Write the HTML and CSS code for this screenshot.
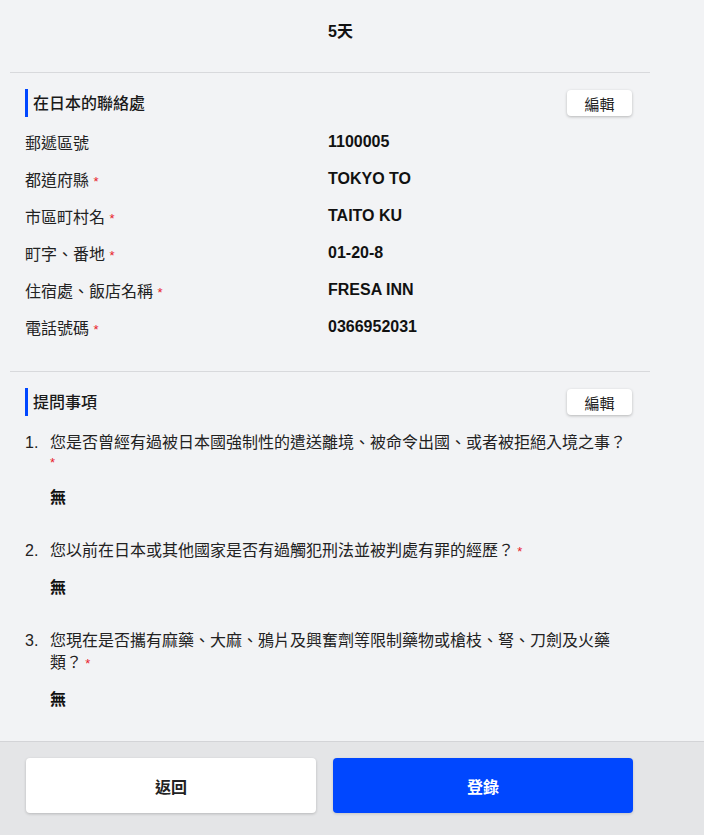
FILE: index.html
```html
<!DOCTYPE html>
<html lang="zh-Hant">
<head>
<meta charset="utf-8">
<title>確認</title>
<link rel="stylesheet" href="styles.css">
</head>
<body>
<main class="page">
  <div class="summary">
    <div class="row"><span class="label"></span><span class="value">5天</span></div>
  </div>

  <section class="section">
    <div class="section-head">
      <h2 class="section-title">在日本的聯絡處</h2>
      <button class="edit-btn" type="button">編輯</button>
    </div>
    <dl class="rows">
      <div class="row"><dt class="label">郵遞區號</dt><dd class="value">1100005</dd></div>
      <div class="row"><dt class="label">都道府縣 <span class="req">*</span></dt><dd class="value">TOKYO TO</dd></div>
      <div class="row"><dt class="label">市區町村名 <span class="req">*</span></dt><dd class="value">TAITO KU</dd></div>
      <div class="row"><dt class="label">町字、番地 <span class="req">*</span></dt><dd class="value">01-20-8</dd></div>
      <div class="row"><dt class="label">住宿處、飯店名稱 <span class="req">*</span></dt><dd class="value">FRESA INN</dd></div>
      <div class="row"><dt class="label">電話號碼 <span class="req">*</span></dt><dd class="value">0366952031</dd></div>
    </dl>
  </section>

  <section class="section">
    <div class="section-head">
      <h2 class="section-title">提問事項</h2>
      <button class="edit-btn" type="button">編輯</button>
    </div>
    <ol class="questions">
      <li class="question">
        <span class="q-num">1.</span>
        <div class="q-body">
          <p class="q-text"><span class="q-main">您是否曾經有過被日本國強制性的遣送離境、被命令出國、或者被拒絕入境之事？</span> <span class="req">*</span></p>
          <p class="q-answer">無</p>
        </div>
      </li>
      <li class="question">
        <span class="q-num">2.</span>
        <div class="q-body">
          <p class="q-text"><span class="q-main">您以前在日本或其他國家是否有過觸犯刑法並被判處有罪的經歷？</span> <span class="req">*</span></p>
          <p class="q-answer">無</p>
        </div>
      </li>
      <li class="question">
        <span class="q-num">3.</span>
        <div class="q-body">
          <p class="q-text"><span class="q-main">您現在是否攜有麻藥、大麻、鴉片及興奮劑等限制藥物或槍枝、弩、刀劍及火藥類？</span> <span class="req">*</span></p>
          <p class="q-answer">無</p>
        </div>
      </li>
    </ol>
  </section>
</main>

<footer class="actions">
  <button class="btn btn-back" type="button">返回</button>
  <button class="btn btn-submit" type="button">登錄</button>
</footer>
</body>
</html>
```

FILE: styles.css
```css
html, body {
  margin: 0;
  padding: 0;
  height: 100%;
}

body {
  background: #f2f3f5;
  font-family: "Liberation Sans", "Noto Sans CJK TC", sans-serif;
  color: #1a1a1a;
  display: flex;
  flex-direction: column;
  height: 100vh;
  overflow: hidden;
}

.page {
  flex: 1 1 0;
  min-height: 0;
  overflow: hidden;
  width: 640px;
  margin-left: 10px;
}

.summary {
  padding: 23px 15px 27px;
}

.row {
  display: grid;
  grid-template-columns: 303px 1fr;
  align-items: start;
}

.label {
  height: 22px;
  font-size: 16px;
  line-height: 22px;
  color: #222;
}

.value {
  margin: 0;
  font-size: 16px;
  line-height: 17px;
  font-weight: 700;
  color: #111;
}

.req {
  color: #e8202a;
  font-size: 13px;
  line-height: 1;
}

.section {
  border-top: 1px solid #d8d9dc;
  padding: 16px 15px 31px;
}

.section-head {
  display: flex;
  align-items: center;
  justify-content: space-between;
  height: 28px;
}

.section-title {
  margin: 0;
  box-sizing: border-box;
  height: 28px;
  padding: 2px 0 0 5px;
  font-size: 16px;
  font-weight: 500;
  line-height: 26px;
  color: #1a1a1a;
  border-left: 3px solid #0047ff;
}

.edit-btn {
  width: 65px;
  height: 26px;
  margin-right: 3px;
  padding: 0;
  border: none;
  border-radius: 4px;
  background: #fff;
  box-shadow: 0 1px 3px rgba(0, 0, 0, 0.25);
  font-family: inherit;
  font-size: 15px;
  color: #222;
}

.rows {
  margin: 16px 0 0;
  display: flex;
  flex-direction: column;
  gap: 15px;
}

.questions {
  list-style: none;
  margin: 16px 0 0;
  padding: 0;
  display: flex;
  flex-direction: column;
  gap: 31px;
}

.question {
  display: flex;
}

.q-num {
  flex: none;
  width: 25px;
  font-size: 16px;
  line-height: 22px;
  color: #222;
}

.q-body {
  flex: 1;
  min-width: 0;
  padding-right: 6px;
}

.q-text {
  margin: 0;
  font-size: 12px;
  line-height: 18px;
}

.q-main {
  font-size: 16px;
  line-height: 22px;
  color: #222;
}

.q-answer {
  margin: 15px 0 0;
  font-size: 16px;
  line-height: 22px;
  font-weight: 700;
  color: #111;
}

.actions {
  flex: none;
  box-sizing: border-box;
  height: 94px;
  border-top: 1px solid #d3d4d7;
  background: #e4e5e7;
  padding: 16px 0 0 26px;
  display: grid;
  grid-template-columns: 290px 300px;
  column-gap: 17px;
  align-content: start;
}

.btn {
  height: 55px;
  border: none;
  border-radius: 4px;
  font-family: inherit;
  font-size: 16px;
  font-weight: 700;
}

.btn-back {
  background: #fff;
  color: #222;
  box-shadow: 0 1px 3px rgba(0, 0, 0, 0.2);
}

.btn-submit {
  background: #0047ff;
  color: #fff;
  box-shadow: 0 1px 3px rgba(0, 0, 0, 0.15);
}
```
